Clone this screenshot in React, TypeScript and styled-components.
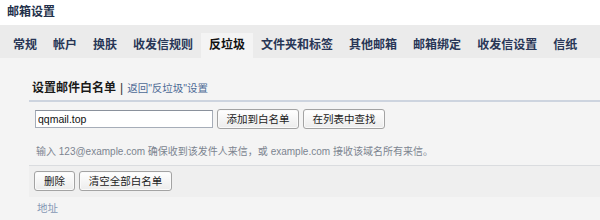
import React from "react";
import styled, { createGlobalStyle } from "styled-components";

const Global = createGlobalStyle`
  html, body { margin: 0; padding: 0; background: #f4f4f4; }
  body { font-family: Arial, "Liberation Sans", "Noto Sans CJK SC", sans-serif; }
`;

const Page = styled.div`
  width: 600px;
  height: 220px;
  overflow: hidden;
  background: #f4f4f4;
`;

const Header = styled.div`
  height: 25px;
  background: #ffffff;
  padding-left: 7px;
  font-size: 12px;
  font-weight: bold;
  line-height: 25px;
  color: #22304a;
  font-family: "Liberation Sans", "Noto Sans CJK SC", sans-serif;
`;

const TabBar = styled.div`
  display: flex;
  align-items: flex-end;
  height: 33px;
  box-sizing: border-box;
  padding: 8px 0 0 5px;
  background: #ebebeb;
`;

const Tab = styled.div<{ $active?: boolean }>`
  height: 25px;
  line-height: 25px;
  padding: 0 8px;
  font-size: 12px;
  font-weight: bold;
  white-space: nowrap;
  color: ${(p) => (p.$active ? "#111111" : "#283656")};
  background: ${(p) => (p.$active ? "#f4f4f4" : "transparent")};
  font-family: "Liberation Sans", "Noto Sans CJK SC", sans-serif;
`;

const Content = styled.div`
  padding: 18px 0 0 29px;
`;

const SectionHead = styled.div`
  height: 24px;
  line-height: 24px;
  padding-left: 3px;
  border-bottom: 2px solid #cdd4df;
  font-size: 12px;
  font-family: "Liberation Sans", "Noto Sans CJK SC", sans-serif;
  color: #1a1a1a;
`;

const HeadTitle = styled.span`
  font-weight: bold;
`;

const Sep = styled.span`
  margin: 0 4px 0 4px;
  color: #333;
`;

const BackLink = styled.a`
  color: #4d6a94;
  text-decoration: none;
  font-size: 10.5px;
`;

const InputRow = styled.div`
  display: flex;
  align-items: center;
  gap: 4px;
  margin-top: 6px;
  padding-left: 6px;
  height: 22px;
`;

const TextInput = styled.input`
  box-sizing: border-box;
  width: 178px;
  height: 18px;
  margin: 0;
  padding: 0 2px;
  border: 1px solid #a6adb8;
  border-top-color: #8a919c;
  background: #ffffff;
  font-size: 10.5px;
  font-family: Arial, "Liberation Sans", sans-serif;
  color: #111;
  outline: none;
`;

const Button = styled.button<{ $w: number }>`
  box-sizing: border-box;
  width: ${(p) => p.$w}px;
  height: 20px;
  padding: 0;
  border: 1px solid #a3a3a3;
  border-radius: 3px;
  background: linear-gradient(#ffffff, #ececec);
  box-shadow: inset 0 0 0 1px #fafafa;
  font-size: 10.5px;
  font-family: "Liberation Sans", "Noto Sans CJK SC", sans-serif;
  color: #222;
  text-align: center;
  line-height: 18px;
`;

const Hint = styled.div`
  margin-top: 12px;
  padding: 0 0 3px 7px;
  line-height: 20px;
  border-bottom: 1px solid #dadcdf;
  font-size: 10px;
  color: #7c8490;
  white-space: nowrap;
  font-family: Arial, "Liberation Sans", "Noto Sans CJK SC", sans-serif;
`;

const Toolbar = styled.div`
  display: flex;
  gap: 4px;
  padding: 5px 0 6px 5px;
  background: #efefef;
`;

const ColumnHead = styled.div`
  height: 23px;
  line-height: 23px;
  padding-left: 8px;
  border-bottom: 1px solid #dadcdf;
  font-size: 10.5px;
  color: #8698b4;
  font-family: "Liberation Sans", "Noto Sans CJK SC", sans-serif;
`;

const tabs = [
  "常规",
  "帐户",
  "换肤",
  "收发信规则",
  "反垃圾",
  "文件夹和标签",
  "其他邮箱",
  "邮箱绑定",
  "收发信设置",
  "信纸",
];

export default function App() {
  return (
    <Page>
      <Global />
      <Header>邮箱设置</Header>
      <TabBar>
        {tabs.map((t) => (
          <Tab key={t} $active={t === "反垃圾"}>
            {t}
          </Tab>
        ))}
      </TabBar>
      <Content>
        <SectionHead>
          <HeadTitle>设置邮件白名单</HeadTitle>
          <Sep>|</Sep>
          <BackLink href="#">返回"反垃圾"设置</BackLink>
        </SectionHead>
        <InputRow>
          <TextInput defaultValue="qqmail.top" />
          <Button $w={82}>添加到白名单</Button>
          <Button $w={82}>在列表中查找</Button>
        </InputRow>
        <Hint>
          输入 123@example.com 确保收到该发件人来信，或 example.com 接收该域名所有来信。
        </Hint>
        <Toolbar>
          <Button $w={41}>删除</Button>
          <Button $w={93}>清空全部白名单</Button>
        </Toolbar>
        <ColumnHead>地址</ColumnHead>
      </Content>
    </Page>
  );
}
